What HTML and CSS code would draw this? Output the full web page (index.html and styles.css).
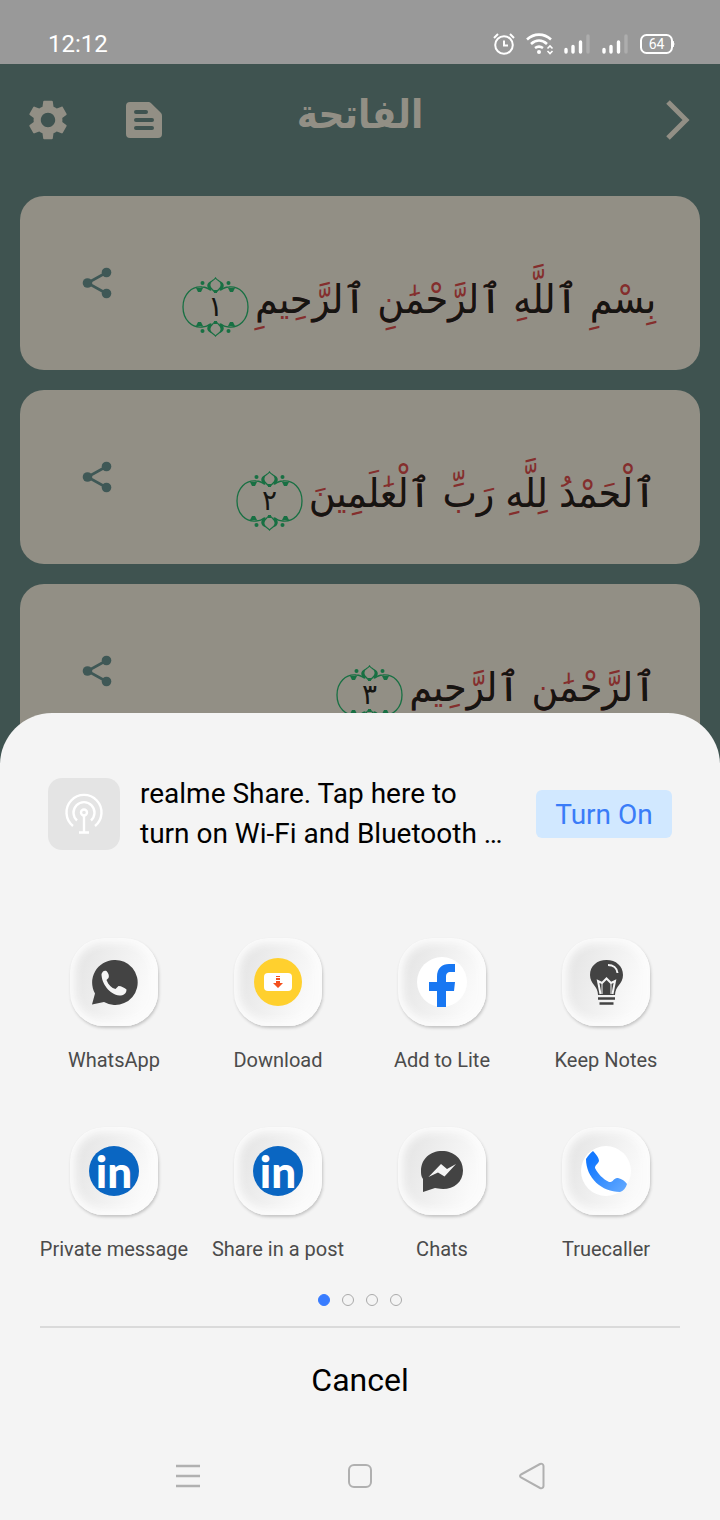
FILE: index.html
```html
<!DOCTYPE html>
<html lang="en">
<head>
<meta charset="utf-8">
<meta name="viewport" content="width=device-width, initial-scale=1">
<title>الفاتحة</title>
<link rel="stylesheet" href="styles.css">
</head>
<body>
<svg class="defs" aria-hidden="true">
  <symbol id="share" viewBox="0 0 30 32"><path d="M24.500 5.500 5.500 16l19 10.500" fill="none" stroke="currentColor" stroke-width="2.600"/><circle cx="24.500" cy="5.500" r="4.800" fill="currentColor"/><circle cx="5.500" cy="16" r="4.800" fill="currentColor"/><circle cx="24.500" cy="26.500" r="4.800" fill="currentColor"/></symbol>
  <symbol id="half" viewBox="0 0 67 30"><path d="M1 30C1 17 10 9 20 10c4 .3 6 1 8 3M66 30c0-13-9-21-19-20-4 .3-6 1-8 3M33.500 1c2 3 6 3 6 7 0 3-3 4-5 7h-2c-2-3-5-4-5-7 0-4 4-4 6-7Z" fill="none" stroke="#187043" stroke-width="1.300"/><path d="M29 4c-5 2-5 7 0 10 1-1 0-2 0-3-1-2-1-4 0-7ZM38 4c5 2 5 7 0 10-1-1 0-2 0-3 1-2 1-4 0-7ZM14 11h7l-2 4h-3ZM46 11h7l-2 4h-3ZM32 13h3v3h-3z" fill="#187043"/><circle cx="20.500" cy="6" r="2" fill="#187043"/><circle cx="46.500" cy="6" r="2" fill="#187043"/></symbol>
  <symbol id="frame" viewBox="0 0 67 60"><use href="#half" width="67" height="30"/><use href="#half" width="67" height="30" transform="matrix(1 0 0 -1 0 60)"/></symbol>
</svg>
<div class="screen">
  <div class="status">
    <span class="clock">12:12</span>
    <div class="signals">
      <svg width="24" height="24" viewBox="0 0 24 24" fill="none" stroke="#fff" stroke-width="2"><circle cx="12" cy="13" r="8.800"/><path d="M12 8.500v5h4M2 6l4-4M22 6l-4-4"/></svg>
      <svg width="28" height="24" viewBox="0 0 28 24" fill="none" stroke="#fff" stroke-width="2.600"><path d="M1 7.500C8 1 18 1 25 7.500M5 12c5-4.500 11-4.500 16 0M9 16c3-2 5-2 8 0"/><circle cx="13" cy="20" r="2" fill="#fff" stroke="none"/><path d="M21.500 16.500 24 14l2.500 2.500M21.500 19l2.500 2.500 2.500-2.500" stroke-width="1.600"/></svg>
      <svg width="28" height="22" viewBox="0 0 28 22" fill="none" stroke="#fff" stroke-width="3.400" stroke-linecap="round"><path d="M2 16.500V19M9 13.500V19M16.500 9V19"/><path d="M24 3v16" stroke="#adadad"/></svg>
      <svg width="28" height="22" viewBox="0 0 28 22" fill="none" stroke="#fff" stroke-width="3.400" stroke-linecap="round"><path d="M2 16.500V19M9 13.500V19M16.500 9V19"/><path d="M24 3v16" stroke="#adadad"/></svg>
      <svg width="35" height="20" viewBox="0 0 35 20"><rect x="1" y="1" width="31" height="18" rx="5.500" fill="none" stroke="#fff" stroke-width="2"/><path d="M33 7q2 3 0 6Z" fill="#fff" stroke="#fff"/><text x="16.500" y="15" text-anchor="middle" font-family="Roboto, sans-serif" font-size="14" fill="#fff">64</text></svg>
    </div>
  </div>
  <header class="topbar">
    <div class="tools">
      <button aria-label="Settings"><svg width="48" height="48" viewBox="0 0 24 24" fill="currentColor"><path d="M19.140 12.940c.04-.3.060-.61.060-.94 0-.32-.02-.64-.07-.94l2.030-1.580c.18-.14.230-.41.120-.61l-1.920-3.320c-.12-.22-.37-.29-.59-.22l-2.390.96c-.5-.38-1.030-.7-1.620-.94l-.36-2.540c-.04-.24-.24-.41-.48-.41h-3.840c-.24 0-.43.170-.47.410l-.36 2.540c-.59.240-1.130.570-1.620.940l-2.390-.96c-.22-.08-.47 0-.59.220L2.740 8.870c-.12.210-.08.470.120.610l2.030 1.580c-.05.300-.09.630-.09.940s.02.640.070.940l-2.030 1.580c-.18.140-.23.410-.12.610l1.920 3.320c.12.220.37.290.590.220l2.390-.96c.5.380 1.030.7 1.620.940l.36 2.540c.05.240.24.410.480.410h3.840c.24 0 .44-.17.470-.41l.36-2.540c.59-.24 1.130-.56 1.620-.94l2.390.96c.22.080.47 0 .590-.22l1.920-3.320c.12-.22.070-.47-.12-.61l-2.010-1.580zM12 15.600c-1.980 0-3.600-1.620-3.600-3.600s1.620-3.600 3.600-3.600 3.600 1.620 3.600 3.600-1.620 3.600-3.600 3.600z"/></svg></button>
      <button aria-label="Notes"><svg width="48" height="48" viewBox="0 0 24 24"><path d="M20.410 8.410 15.580 3.580C15.210 3.210 14.700 3 14.170 3H5a2 2 0 0 0-2 2v14a2 2 0 0 0 2 2h14a2 2 0 0 0 2-2V9.830c0-.53-.21-1.040-.59-1.420z" fill="currentColor"/><path d="M8 8h5M8 12h8M8 16h8" stroke="#3f5350" stroke-width="2" stroke-linecap="round"/></svg></button>
    </div>
    <h1 lang="ar" dir="rtl">الفاتحة</h1>
    <button class="next" aria-label="Next"><svg width="24" height="40" viewBox="0 0 24 40"><path d="m2 2 18 18L2 38" fill="none" stroke="currentColor" stroke-width="5"/></svg></button>
  </header>
  <main class="verses">
    <article class="verse">
      <button aria-label="Share verse 1"><svg width="30" height="32"><use href="#share"/></svg></button>
      <p lang="ar" dir="rtl"><span data-base="ٮسم">بِسْمِ</span> <span data-base="ٱلله">ٱللَّهِ</span> <span data-base="ٱلرحمں">ٱلرَّحْمَٰنِ</span> <span data-base="ٱلرحىم">ٱلرَّحِيمِ</span></p>
      <svg class="number" viewBox="0 0 67 60"><use href="#frame"/><text x="33.500" y="39">١</text></svg>
    </article>
    <article class="verse">
      <button aria-label="Share verse 2"><svg width="30" height="32"><use href="#share"/></svg></button>
      <p lang="ar" dir="rtl"><span data-base="ٱلحمد">ٱلْحَمْدُ</span> <span data-base="لله">لِلَّهِ</span> <span data-base="رٮ">رَبِّ</span> <span data-base="ٱلعلمىں">ٱلْعَٰلَمِينَ</span></p>
      <svg class="number" viewBox="0 0 67 60"><use href="#frame"/><text x="33.500" y="39">٢</text></svg>
    </article>
    <article class="verse">
      <button aria-label="Share verse 3"><svg width="30" height="32"><use href="#share"/></svg></button>
      <p lang="ar" dir="rtl"><span data-base="ٱلرحمں">ٱلرَّحْمَٰنِ</span> <span data-base="ٱلرحىم">ٱلرَّحِيمِ</span></p>
      <svg class="number" viewBox="0 0 67 60"><use href="#frame"/><text x="33.500" y="39">٣</text></svg>
    </article>
  </main>

  <section class="sheet" aria-label="Share">
    <div class="nearby">
      <svg width="72" height="72" viewBox="0 0 72 72" fill="none" stroke="#fff" stroke-width="2.400"><rect width="72" height="72" rx="14" fill="#e4e4e4" stroke="none"/><path d="M25 48a17.500 17.500 0 1 1 22 0M29 42.500a10.500 10.500 0 1 1 14 0"/><circle cx="36" cy="34.500" r="3"/><path d="M36 38v17M31 54.500h10"/></svg>
      <p>realme Share. Tap here to turn on Wi-Fi and Bluetooth …</p>
      <button>Turn On</button>
    </div>
    <div class="apps">
      <button class="app"><span class="tile"><svg width="50" height="50" viewBox="0 0 50 50"><path d="M25 3a22.500 22.500 0 1 1-10 42L3 47.500l3-11A22.500 22.500 0 0 1 25 3Z" fill="#434343"/><path d="M12.500 17c1-3 3-4 5-3 2 2 3 5 2 7l-2 2c2 5 5 8 9 9l3-3c3 0 6 2 8 3.500 0 4-3 6-7 6-10-1-18-12-18-21.500Z" fill="#f5f5f5"/></svg></span>WhatsApp</button>
      <button class="app"><span class="tile"><svg width="50" height="50" viewBox="0 0 50 50"><circle cx="25" cy="25" r="24" fill="#ffd02e"/><rect x="11" y="16" width="28" height="18" rx="4" fill="#fff"/><path d="M23 19h4v1h-4zM23 21h4v2h-4zM23 24h4v2h3l-5 5-5-5h3z" fill="#f4511e"/></svg></span>Download</button>
      <button class="app"><span class="tile"><svg width="50" height="50" viewBox="0 0 50 50"><circle cx="25" cy="25" r="25" fill="#fff"/><path d="M20 50V34h-8v-9h8v-5c0-9 5-13 12-13h6v8h-4c-4 0-5 2-5 5v5h9l-1 9h-8v16Z" fill="#1877f2"/></svg></span>Add to Lite</button>
      <button class="app"><span class="tile"><svg width="50" height="50" viewBox="0 0 50 50"><path d="M17 38c0-9-8-11-8-20C9 9 16 3 25.500 3S42 9 42 18c0 9-8 11-8 20Z" fill="#434343"/><path d="M19.500 37 17 24l4 2 4.500-4.500L30 26l4-2-2.500 13" fill="none" stroke="#f5f5f5" stroke-width="2"/><path d="M21 37V27M30 37V27" stroke="#f5f5f5"/><path d="M27 8c5 0 9 3 9.500 8" fill="none" stroke="#f5f5f5" stroke-width="2"/><path d="M17 41.500h17M18.500 46.500h14" stroke="#434343" stroke-width="2.600"/></svg></span>Keep Notes</button>
      <button class="app"><span class="tile"><svg class="linkedin" width="50" height="50" viewBox="0 0 50 50"><circle cx="25" cy="25" r="25"/><text x="25" y="42">in</text></svg></span>Private message</button>
      <button class="app"><span class="tile"><svg class="linkedin" width="50" height="50" viewBox="0 0 50 50"><circle cx="25" cy="25" r="25"/><text x="25" y="42">in</text></svg></span>Share in a post</button>
      <button class="app"><span class="tile"><svg width="50" height="50" viewBox="0 0 50 50"><path d="M25 5c12 0 21 8 21 19.500S37 43 26 43c-4 0-6-1-8-1L6 46V33C4 30 4 28 4 25 4 13 13 5 25 5Z" fill="#434343"/><path d="m11.500 31 12.500-13 6 5 9-5-11.500 12.500-6.500-4Z" fill="#f5f5f5"/></svg></span>Chats</button>
      <button class="app"><span class="tile"><svg width="50" height="50" viewBox="0 0 50 50"><linearGradient id="call" x2="1" y2="1"><stop offset=".2" stop-color="#1479ff"/><stop offset="1" stop-color="#66abff"/></linearGradient><circle cx="25" cy="25" r="25" fill="#fff"/><path d="M12 5c3 3 6 7 6 10-1 3-4 4-4 7 3 6 8 11 14 14 4 1 5-5 9-4 4 1 7 3 9 6-1 4-4 7-7 8C21 46 5 32 5 13c2-3 4-6 7-8Z" fill="url(#call)"/></svg></span>Truecaller</button>
    </div>
    <div class="pages"><i class="on"></i><i></i><i></i><i></i></div>
    <button class="cancel">Cancel</button>
    <nav class="keys" aria-label="System">
      <button aria-label="Recent"><svg width="28" height="28" viewBox="0 0 28 28"><path d="M2 4h24M2 14h24M2 24h24" stroke="#b0b0b0" stroke-width="2.500"/></svg></button>
      <button aria-label="Home"><svg width="28" height="28" viewBox="0 0 28 28"><rect x="3" y="3" width="22" height="22" rx="5" fill="none" stroke="#b0b0b0" stroke-width="2"/></svg></button>
      <button aria-label="Back"><svg width="28" height="28" viewBox="0 0 28 28"><path d="M3 12.500 22 2q3-1 3.500 2v20q-.5 3-3.500 2L3 15.500q-2-1.500 0-3Z" fill="none" stroke="#b0b0b0" stroke-width="2"/></svg></button>
    </nav>
  </section>
</div>
</body>
</html>
```
FILE: styles.css
```css
* { box-sizing: border-box; }
body { margin: 0; background: #3f5350; font-family: Roboto, sans-serif; }
button { margin: 0; padding: 0; border: 0; background: none; color: inherit; font: inherit; cursor: pointer; }
svg { display: block; flex: none; }
h1, p { margin: 0; }
.defs { position: absolute; width: 0; height: 0; }

.screen { position: relative; min-height: 100vh; overflow: hidden; }

.status { display: flex; justify-content: space-between; align-items: center; padding: 24px 45px 0 48px; height: 64px; background: #999; color: #fff; }
.clock { font-size: 24px; line-height: 40px; }
.signals { display: flex; align-items: center; gap: 10px; }

.topbar { display: grid; grid-template-columns: 1fr auto 1fr; align-items: center; padding: 32px 24px 52px; color: #928f85; }
.tools { display: flex; gap: 48px; }
.topbar h1 { align-self: start; font: bold 40px/36px "DejaVu Sans Condensed", "DejaVu Sans", sans-serif; }
.next { justify-self: end; padding-right: 6px; }

.verses { display: grid; gap: 20px; padding: 0 20px; }
.verse { display: flex; align-items: center; min-height: 174px; padding: 0 44px 0 62px; border-radius: 24px; background: #928f85; }
.verse button { color: #3f5856; }
.verse p { order: 2; padding-top: 32px; font: 40px/80px "DejaVu Sans Condensed", "DejaVu Sans", sans-serif; color: #842e2d; white-space: nowrap; }
.verse span { position: relative; }
.verse span::after { content: attr(data-base); position: absolute; top: 0; right: 0; line-height: normal; color: #151512; }
.number { width: 67px; height: 60px; margin: 48px 6px 0 auto; }
.number text { font: 28px "DejaVu Sans", sans-serif; text-anchor: middle; fill: #151512; }

.sheet { position: absolute; left: 0; right: 0; bottom: 0; padding-top: 61px; border-radius: 52px 52px 0 0; background: #f4f4f4; }
.nearby { display: flex; align-items: center; gap: 20px; padding: 0 48px; }
.nearby p { flex: 1; padding-right: 8px; font-size: 28px; line-height: 40px; color: #000; }
.nearby button { width: 136px; height: 48px; border-radius: 6px; background: #d1e8ff; color: #3a7cf8; font-size: 28px; }

.apps { display: grid; grid-template-columns: repeat(4, 1fr); row-gap: 57px; padding: 84px 32px 0; }
.app { display: flex; flex-direction: column; align-items: center; gap: 24px; font-size: 20px; line-height: 20px; color: #4b4b4b; white-space: nowrap; }
.app .tile { display: grid; place-items: center; width: 88px; height: 88px; border-radius: 34px; background: linear-gradient(110deg, #e6e6e6 15%, #fafafa 80%); box-shadow: inset 0 0 8px 5px #fcfcfc, 1px 2px 3px #c4c4c4; }
.linkedin { overflow: visible; }
.linkedin circle { fill: #0a66c2; }
.linkedin text { font: 900 44px Lato, sans-serif; text-anchor: middle; fill: #fff; }

.pages { display: flex; justify-content: center; gap: 12px; margin: 0 40px; padding: 35px 0 20px; border-bottom: 2px solid #dadada; }
.pages i { width: 12px; height: 12px; border: 1px solid #aaa; border-radius: 50%; }
.pages .on { border-color: #387cff; background: #387cff; }
.cancel { display: block; width: 100%; height: 104px; font-size: 32px; color: #000; }
.keys { display: flex; justify-content: space-between; padding: 30px 174px; }
```
